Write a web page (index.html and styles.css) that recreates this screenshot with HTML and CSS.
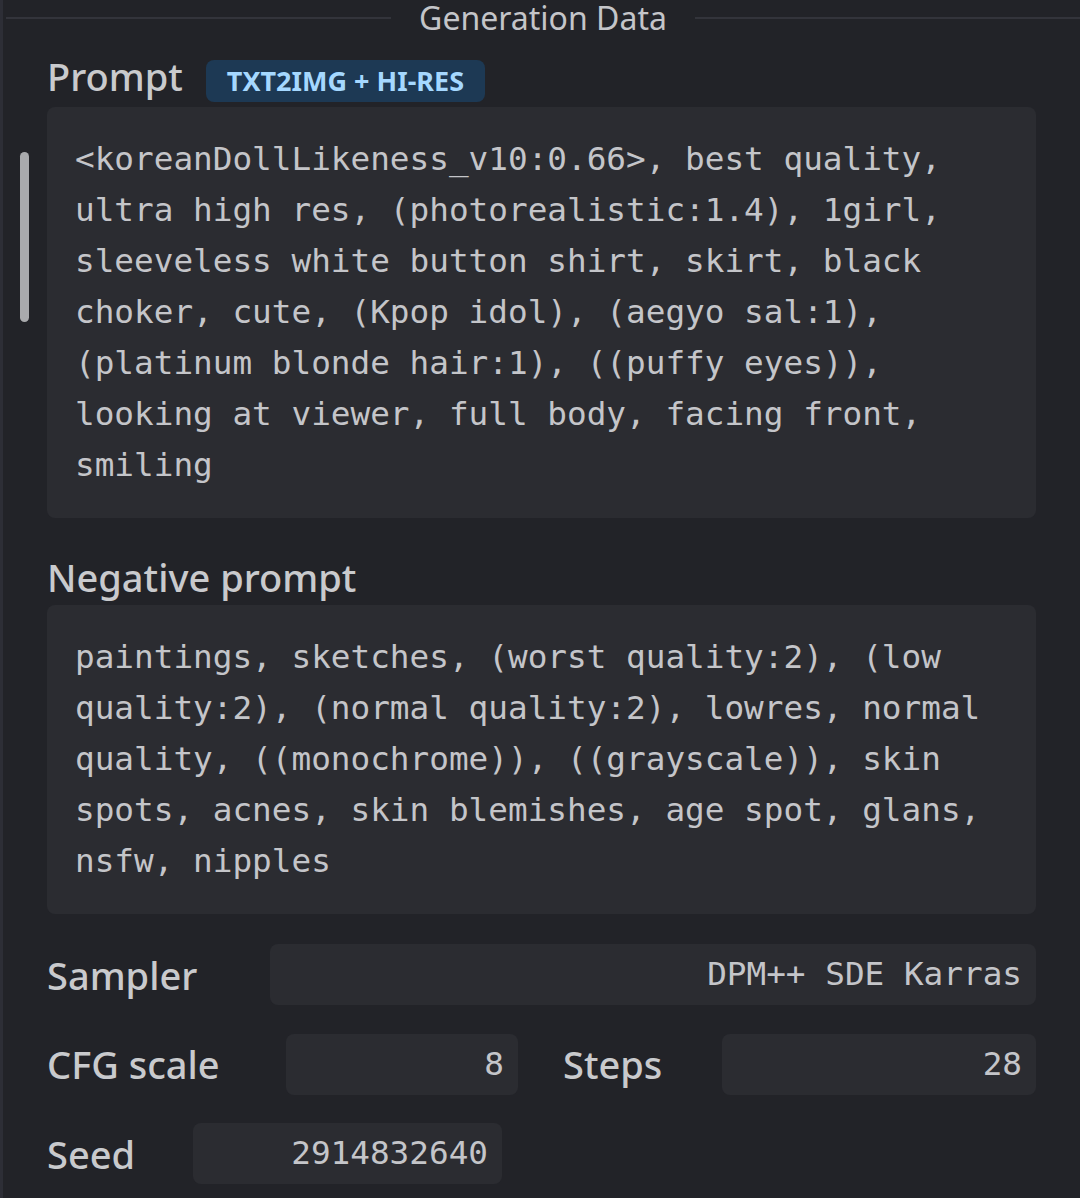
FILE: index.html
```html
<!DOCTYPE html>
<html lang="en">
<head>
  <meta charset="UTF-8">
  <title>Generation Data</title>
  <link rel="stylesheet" href="styles.css">
</head>
<body>
  <div class="panel">
    <!--DIVIDER-->
    <div class="divider">
      <span class="divider-line"></span>
      <span class="divider-label">Generation Data</span>
      <span class="divider-line"></span>
    </div>

    <div class="scroll-thumb"></div>

    <!--PROMPTS-->
    <div class="field-head">
      <span class="label">Prompt</span>
      <span class="badge">TXT2IMG + HI-RES</span>
    </div>
    <div class="code-box">&lt;koreanDollLikeness_v10:0.66&gt;, best quality, ultra high res, (photorealistic:1.4), 1girl, sleeveless white button shirt, skirt, black choker, cute, (Kpop idol), (aegyo sal:1), (platinum blonde hair:1), ((puffy eyes)), looking at viewer, full body, facing front, smiling</div>

    <div class="field-head neg">
      <span class="label">Negative prompt</span>
    </div>
    <div class="code-box">paintings, sketches, (worst quality:2), (low quality:2), (normal quality:2), lowres, normal quality, ((monochrome)), ((grayscale)), skin spots, acnes, skin blemishes, age spot, glans, nsfw, nipples</div>

    <!--SETTINGS-->
    <div class="settings">
      <div class="row">
        <span class="label sampler-label">Sampler</span>
        <div class="value grow">DPM++ SDE Karras</div>
      </div>
      <div class="row">
        <span class="label cfg-label">CFG scale</span>
        <div class="value cfg">8</div>
        <span class="label steps-label">Steps</span>
        <div class="value grow">28</div>
      </div>
      <div class="row">
        <span class="label seed-label">Seed</span>
        <div class="value seed">2914832640</div>
      </div>
    </div>
  </div>
</body>
</html>
```

FILE: styles.css
```css
* {
  margin: 0;
  padding: 0;
  box-sizing: border-box;
}

body {
  background-color: #222328;
  font-family: 'Noto Sans', 'Open Sans', sans-serif;
  color: #c9cacd;
  height: 1198px;
  overflow: hidden;
}

.panel {
  position: relative;
  height: 100%;
  border-left: 3px solid #2d2e36;
  padding: 0 44px 0 44px;
}

.divider {
  display: flex;
  align-items: center;
  margin: 0 -44px 0 -41px;
  height: 36px;
}

.divider-line {
  flex: 1;
  height: 2px;
  background-color: #33343b;
}

.divider-label {
  font-size: 32px;
  line-height: 36px;
  padding: 0 28px;
  color: #c4c5c9;
}

.scroll-thumb {
  position: absolute;
  left: 17px;
  top: 152px;
  width: 9px;
  height: 170px;
  border-radius: 5px;
  background-color: #a9aaad;
}

.field-head {
  display: flex;
  align-items: baseline;
  gap: 23px;
  margin-top: 17px;
  margin-bottom: 5px;
}

.field-head.neg {
  margin-top: 36px;
}

.label {
  font-size: 38px;
  line-height: 46px;
  font-weight: 500;
  color: #c9cacd;
  white-space: nowrap;
}

.badge {
  background-color: #1d3954;
  color: #a5d8ff;
  font-size: 27px;
  font-weight: 700;
  padding: 0 21px;
  height: 42px;
  line-height: 42px;
  border-radius: 8px;
}

.code-box {
  background-color: #2b2c31;
  border-radius: 8px;
  padding: 27px 28px;
  font-family: 'DejaVu Sans Mono', monospace;
  font-size: 32.7px;
  line-height: 51px;
  color: #c4c5c9;
}

.settings {
  display: flex;
  flex-direction: column;
  gap: 28.5px;
  margin-top: 30px;
}

.row {
  display: flex;
  align-items: center;
  gap: 56px;
  height: 61px;
}

.sampler-label {
  width: 167px;
}

.cfg-label {
  width: 183px;
}

.steps-label {
  width: 103px;
  margin-left: -11px;
}

.seed-label {
  width: 90px;
}

.value {
  height: 61px;
  line-height: 61px;
  background-color: #2b2c31;
  border-radius: 8px;
  padding: 0 14px;
  text-align: right;
  font-family: 'DejaVu Sans Mono', monospace;
  font-size: 32.7px;
  color: #c4c5c9;
}

.grow {
  flex: 1;
}

.cfg {
  width: 232px;
}

.seed {
  width: 309px;
}
```
